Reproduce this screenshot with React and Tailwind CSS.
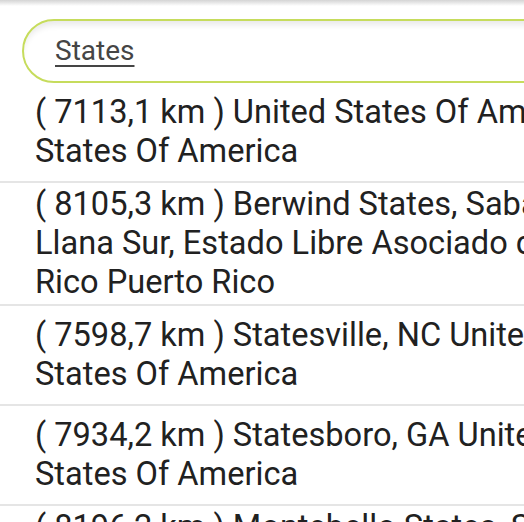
export default function App() {
  const rows = [
    ["( 7113,1 km ) United States Of America", "States Of America"],
    ["( 8105,3 km ) Berwind States, Sabana", "Llana Sur, Estado Libre Asociado de", "Rico Puerto Rico"],
    ["( 7598,7 km ) Statesville, NC United", "States Of America"],
    ["( 7934,2 km ) Statesboro, GA United", "States Of America"],
    ["( 8196,2 km ) Montebello States, Sabana", "Llana Sur, Estado Libre Asociado de", "Rico Puerto Rico"],
  ];
  return (
    <div className="w-[524px] h-[522px] overflow-hidden bg-white" style={{ fontFamily: "Roboto, 'Noto Sans', sans-serif" }}>
      <div className="h-[6px] bg-gradient-to-b from-[#d4d4d4] to-white" />
      <div className="pt-[13px] pl-[22px] -mr-[40px]">
        <div className="h-[64px] rounded-full border-[2.5px] border-[#c6dc5c] shadow-[inset_0_7px_6px_-3px_rgba(0,0,0,0.09)] flex items-center pl-[31px]">
          <span className="text-[28px] leading-none text-[#454545] underline decoration-2 underline-offset-[5px]">States</span>
        </div>
      </div>
      <div>
        {rows.map((lines, i) => (
          <div key={i} className="min-h-[100px] border-b-2 border-[#e5e5e5] py-[2px] pl-[35px] flex flex-col justify-center">
            {lines.map((l, j) => (
              <div key={j} className="whitespace-nowrap text-[32.6px] leading-[39px] text-[#212121]">{l}</div>
            ))}
          </div>
        ))}
      </div>
    </div>
  );
}
